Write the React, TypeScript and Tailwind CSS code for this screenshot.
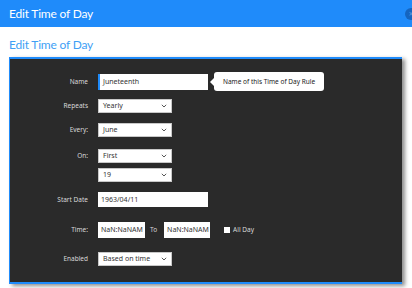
import React from "react";

const font = { fontFamily: "'Noto Sans', 'Open Sans', sans-serif" };

function Chevron() {
  return (
    <svg width="6" height="4" viewBox="0 0 6 4" className="absolute right-[4px] top-1/2 -translate-y-1/2">
      <path d="M0.8 0.8 L3 3 L5.2 0.8" fill="none" stroke="#444" strokeWidth="0.9" />
    </svg>
  );
}

function Select({ value }: { value: string }) {
  return (
    <div className="relative w-[74px] h-[14px] bg-white border border-[#c8c8c8] text-[7px] text-[#333] leading-[12px] pl-[4px]">
      {value}
      <Chevron />
    </div>
  );
}

function Label({ children }: { children: React.ReactNode }) {
  return (
    <div className="w-[78px] text-right text-[6.5px] text-[#d8d8d8] shrink-0">{children}</div>
  );
}

export default function App() {
  return (
    <div className="w-[412px] h-[288px] bg-white overflow-hidden relative" style={font}>
      <div className="h-[27px] bg-[#1f8bfa] flex items-center justify-between pl-[9px]">
        <span className="text-white text-[12px] tracking-[-0.2px]" style={{ fontFamily: "Lato, sans-serif" }}>
          Edit Time of Day
        </span>
        <div className="w-[12px] h-[12px] rounded-full bg-[#1565c0] flex items-center justify-center mr-[-5px] text-[#5a9be0] text-[8px] leading-none">
          ×
        </div>
      </div>
      <div className="pl-[9px] pt-[4px] h-[30px]">
        <span className="text-[#3f9ff5] text-[12px] tracking-[-0.2px]" style={{ fontFamily: "Lato, sans-serif" }}>
          Edit Time of Day
        </span>
      </div>
      <div className="ml-[9px] w-[393px] h-[227px] bg-[#2a2a2a] border-t-2 border-l border-b-2 border-[#1f8bfa] shadow-[3px_2px_4px_rgba(0,0,0,0.45)] pt-[13px] flex flex-col">
        <div className="flex items-center gap-[10px]">
          <Label>Name</Label>
          <div className="w-[110px] h-[16px] bg-white border-l-2 border-[#1f8bfa] text-[7px] text-[#333] leading-[16px] pl-[3px]">
            Juneteenth
          </div>
          <div className="relative ml-[-4px] h-[19px] bg-white rounded-[3px] px-[9px] flex items-center text-[6.5px] text-[#222]">
            <div className="absolute left-[-4px] top-1/2 -translate-y-1/2 w-0 h-0 border-y-[4px] border-y-transparent border-r-[4px] border-r-white" />
            Name of this Time of Day Rule
          </div>
        </div>
        <div className="flex items-center gap-[10px] mt-[8px]">
          <Label>Repeats</Label>
          <Select value="Yearly" />
        </div>
        <div className="flex items-center gap-[10px] mt-[10px]">
          <Label>Every:</Label>
          <Select value="June" />
        </div>
        <div className="flex items-center gap-[10px] mt-[12px]">
          <Label>On:</Label>
          <Select value="First" />
        </div>
        <div className="flex items-center gap-[10px] mt-[5px]">
          <div className="w-[78px] shrink-0" />
          <Select value="19" />
        </div>
        <div className="flex items-center gap-[10px] mt-[10px]">
          <Label>Start Date</Label>
          <div className="w-[110px] h-[15px] bg-white text-[7px] text-[#333] leading-[15px] pl-[3px]">1963/04/11</div>
        </div>
        <div className="flex items-center gap-[10px] mt-[15px]">
          <Label>Time:</Label>
          <div className="w-[47px] h-[16px] bg-white text-[7px] text-[#333] leading-[16px] pl-[3px]">NaN:NaNAM</div>
          <span className="text-[6.5px] text-[#d8d8d8] ml-[-5px]">To</span>
          <div className="w-[46px] h-[16px] bg-white text-[7px] text-[#333] leading-[16px] pl-[3px] ml-[-3px]">NaN:NaNAM</div>
          <div className="flex items-center gap-[3px] ml-[4px]">
            <div className="w-[6px] h-[6px] bg-white" />
            <span className="text-[6.5px] text-[#d8d8d8]">All Day</span>
          </div>
        </div>
        <div className="flex items-center gap-[10px] mt-[14px]">
          <Label>Enabled</Label>
          <Select value="Based on time" />
        </div>
      </div>
    </div>
  );
}
